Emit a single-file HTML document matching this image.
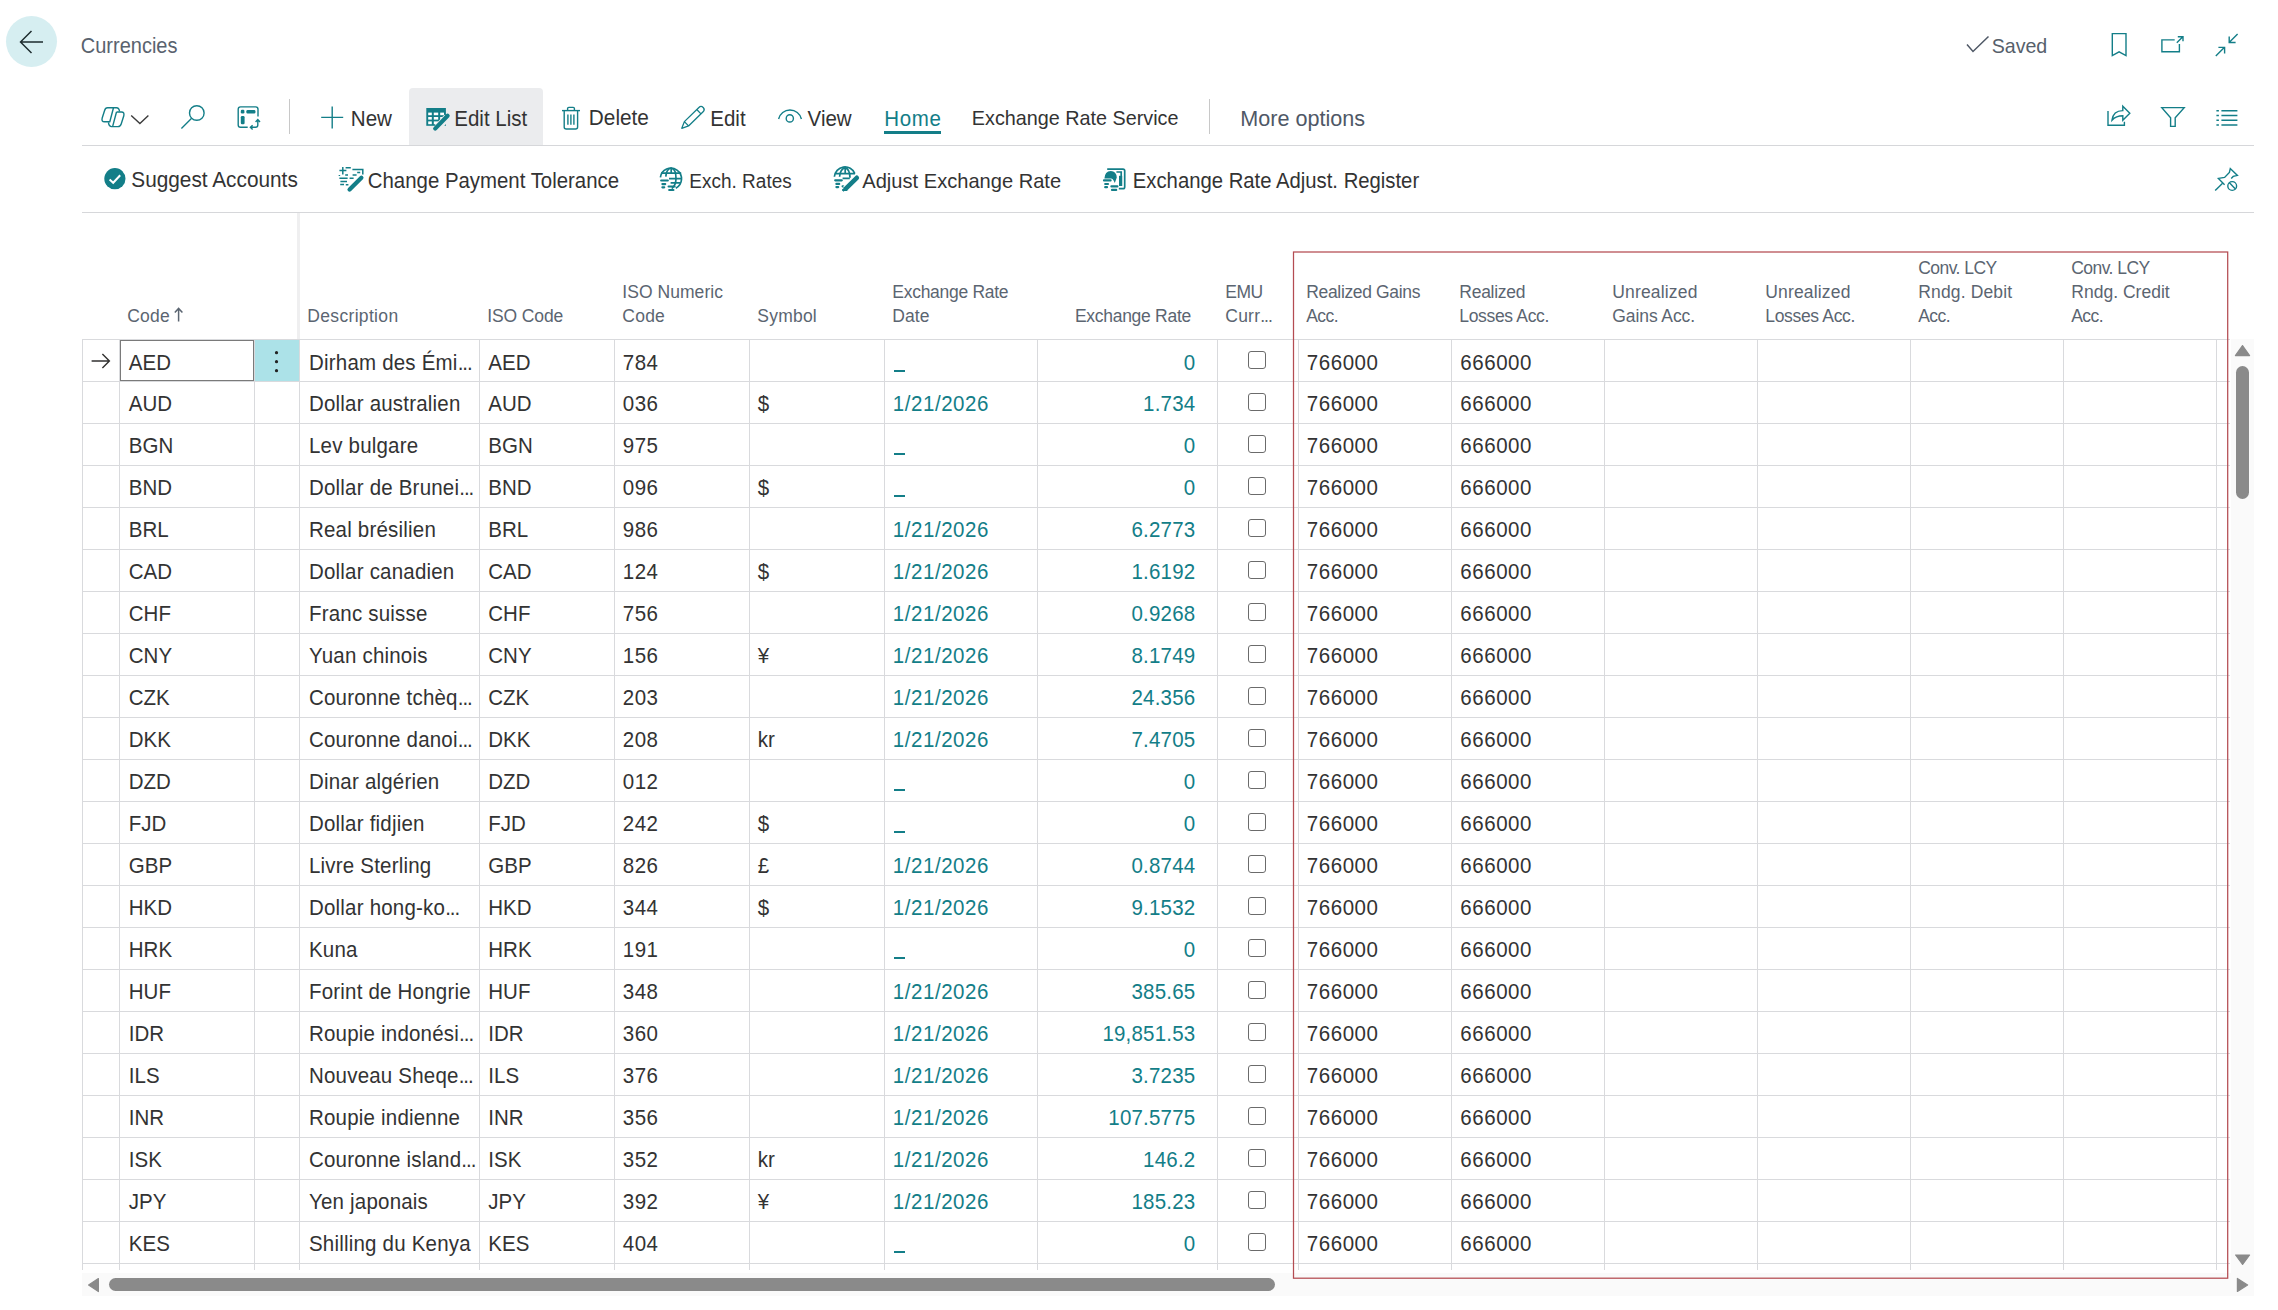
<!DOCTYPE html>
<html><head><meta charset="utf-8"><title>Currencies</title><style>
html,body{margin:0;padding:0;background:#fff;}
body{width:2278px;height:1310px;position:relative;overflow:hidden;font-family:"Liberation Sans", sans-serif;}
.t{position:absolute;white-space:nowrap;}
.hl{position:absolute;left:82px;width:2148px;height:1px;background:#d9dadd;}
.vl{position:absolute;top:339px;width:1px;height:931px;background:#d9dadd;}
.cb{position:absolute;left:1248px;width:18px;height:18px;box-sizing:border-box;border:1.5px solid #6b6b6b;border-radius:3px;background:#fff;}
svg.ov{position:absolute;left:0;top:0;z-index:4;}
</style></head>
<body>
<div style="position:absolute;left:6px;top:16px;width:51px;height:51px;border-radius:50%;background:#d6eef1"></div>
<div class="t" style="left:80.8px;top:36px;font-size:20px;line-height:20px;color:#59626e;transform:scaleY(1.07);transform-origin:0 17px;">Currencies</div>
<div class="t" style="left:1991.7px;top:37px;font-size:19.6px;line-height:19.6px;color:#56606b;transform:scaleY(1.06);transform-origin:0 17px;">Saved</div>
<div style="position:absolute;left:289px;top:99px;width:1px;height:35px;background:#c8c8c8"></div>
<div class="t" style="left:350.8px;top:109px;font-size:20.6px;line-height:20.6px;color:#333333;transform:scaleY(1.05);transform-origin:0 17px;">New</div>
<div style="position:absolute;left:409px;top:88px;width:134px;height:57px;border-radius:4px 4px 0 0;background:#ebecee"></div>
<div class="t" style="left:454.3px;top:109px;font-size:20.5px;line-height:20.5px;color:#333333;transform:scaleY(1.05);transform-origin:0 17px;">Edit List</div>
<div class="t" style="left:588.8px;top:108px;font-size:20.8px;line-height:20.8px;color:#333333;transform:scaleY(1.05);transform-origin:0 18px;">Delete</div>
<div class="t" style="left:710.3px;top:109px;font-size:20.5px;line-height:20.5px;color:#333333;transform:scaleY(1.05);transform-origin:0 17px;">Edit</div>
<div class="t" style="left:807.5999999999999px;top:109px;font-size:20.5px;line-height:20.5px;color:#333333;transform:scaleY(1.05);transform-origin:0 17px;">View</div>
<div class="t" style="left:884.3px;top:109px;font-size:20.5px;line-height:20.5px;color:#137e88;transform:scaleY(1.05);transform-origin:0 17px;letter-spacing:0.6px;">Home</div>
<div style="position:absolute;left:884px;top:131px;width:57px;height:3px;background:#137e88"></div>
<div class="t" style="left:971.8px;top:109px;font-size:19.8px;line-height:19.8px;color:#333333;transform:scaleY(1.05);transform-origin:0 17px;">Exchange Rate Service</div>
<div style="position:absolute;left:1209px;top:99px;width:1px;height:35px;background:#c8c8c8"></div>
<div class="t" style="left:1240.3px;top:108px;font-size:21.6px;line-height:21.6px;color:#4f5866;transform:scaleY(1.03);transform-origin:0 18px;">More options</div>
<div style="position:absolute;left:82px;top:145px;width:2172px;height:1px;background:#d6d7da"></div>
<div class="t" style="left:131.3px;top:169.5px;font-size:20.8px;line-height:20.8px;color:#333333;transform:scaleY(1.05);transform-origin:0 18px;">Suggest Accounts</div>
<div class="t" style="left:367.8px;top:170.5px;font-size:20.4px;line-height:20.4px;color:#333333;transform:scaleY(1.05);transform-origin:0 17px;">Change Payment Tolerance</div>
<div class="t" style="left:689.3px;top:171.5px;font-size:19.0px;line-height:19.0px;color:#333333;transform:scaleY(1.05);transform-origin:0 16px;">Exch. Rates</div>
<div class="t" style="left:862.3px;top:170.5px;font-size:20.1px;line-height:20.1px;color:#333333;transform:scaleY(1.05);transform-origin:0 17px;">Adjust Exchange Rate</div>
<div class="t" style="left:1132.8px;top:170.5px;font-size:20.3px;line-height:20.3px;color:#333333;transform:scaleY(1.05);transform-origin:0 17px;">Exchange Rate Adjust. Register</div>
<div style="position:absolute;left:82px;top:212px;width:2172px;height:1px;background:#d6d7da"></div>
<div style="position:absolute;left:297px;top:213px;width:3px;height:126px;background:#efeff0"></div>
<div class="hl" style="top:339px"></div>
<div class="hl" style="top:381px"></div>
<div class="hl" style="top:423px"></div>
<div class="hl" style="top:465px"></div>
<div class="hl" style="top:507px"></div>
<div class="hl" style="top:549px"></div>
<div class="hl" style="top:591px"></div>
<div class="hl" style="top:633px"></div>
<div class="hl" style="top:675px"></div>
<div class="hl" style="top:717px"></div>
<div class="hl" style="top:759px"></div>
<div class="hl" style="top:801px"></div>
<div class="hl" style="top:843px"></div>
<div class="hl" style="top:885px"></div>
<div class="hl" style="top:927px"></div>
<div class="hl" style="top:969px"></div>
<div class="hl" style="top:1011px"></div>
<div class="hl" style="top:1053px"></div>
<div class="hl" style="top:1095px"></div>
<div class="hl" style="top:1137px"></div>
<div class="hl" style="top:1179px"></div>
<div class="hl" style="top:1221px"></div>
<div class="hl" style="top:1263px"></div>
<div class="vl" style="left:82px"></div>
<div class="vl" style="left:119px"></div>
<div class="vl" style="left:254px"></div>
<div class="vl" style="left:299px"></div>
<div class="vl" style="left:479px"></div>
<div class="vl" style="left:614px"></div>
<div class="vl" style="left:749px"></div>
<div class="vl" style="left:884px"></div>
<div class="vl" style="left:1037px"></div>
<div class="vl" style="left:1217px"></div>
<div class="vl" style="left:1298px"></div>
<div class="vl" style="left:1451px"></div>
<div class="vl" style="left:1604px"></div>
<div class="vl" style="left:1757px"></div>
<div class="vl" style="left:1910px"></div>
<div class="vl" style="left:2063px"></div>
<div class="vl" style="left:2216px"></div>
<div style="position:absolute;left:255px;top:340px;width:44px;height:41px;background:#ace2e8"></div>
<div style="position:absolute;left:120px;top:340px;width:134px;height:41px;box-sizing:border-box;border:1.5px solid #7a7a7a;background:#fff"></div>
<div class="t" style="left:128.8px;top:352.6px;font-size:20.5px;line-height:20.5px;color:#333333;transform:scaleY(1.06);transform-origin:0 17px;">AED</div>
<div class="t" style="left:309.0px;top:352.6px;font-size:20.5px;line-height:20.5px;color:#333333;transform:scaleY(1.06);transform-origin:0 17px;letter-spacing:0.2px;">Dirham des Émi<span style="letter-spacing:-1.0px">...</span></div>
<div class="t" style="left:488.3px;top:352.6px;font-size:20.5px;line-height:20.5px;color:#333333;transform:scaleY(1.06);transform-origin:0 17px;">AED</div>
<div class="t" style="left:622.8px;top:352.6px;font-size:20.5px;line-height:20.5px;color:#333333;transform:scaleY(1.06);transform-origin:0 17px;letter-spacing:0.5px;">784</div>
<div style="position:absolute;left:894px;top:370.1px;width:11px;height:2.4px;background:#137e88"></div>
<div class="t" style="right:1082.6px;top:352.6px;font-size:20.5px;line-height:20.5px;color:#137e88;transform:scaleY(1.06);transform-origin:0 17px;letter-spacing:0.2px;">0</div>
<div class="cb" style="top:351px"></div>
<div class="t" style="left:1306.8px;top:352.6px;font-size:20.5px;line-height:20.5px;color:#333333;transform:scaleY(1.06);transform-origin:0 17px;letter-spacing:0.55px;">766000</div>
<div class="t" style="left:1460.3px;top:352.6px;font-size:20.5px;line-height:20.5px;color:#333333;transform:scaleY(1.06);transform-origin:0 17px;letter-spacing:0.55px;">666000</div>
<div class="t" style="left:128.8px;top:393.6px;font-size:20.5px;line-height:20.5px;color:#333333;transform:scaleY(1.06);transform-origin:0 17px;">AUD</div>
<div class="t" style="left:309.0px;top:393.6px;font-size:20.5px;line-height:20.5px;color:#333333;transform:scaleY(1.06);transform-origin:0 17px;letter-spacing:0.2px;">Dollar australien</div>
<div class="t" style="left:488.3px;top:393.6px;font-size:20.5px;line-height:20.5px;color:#333333;transform:scaleY(1.06);transform-origin:0 17px;">AUD</div>
<div class="t" style="left:622.8px;top:393.6px;font-size:20.5px;line-height:20.5px;color:#333333;transform:scaleY(1.06);transform-origin:0 17px;letter-spacing:0.5px;">036</div>
<div class="t" style="left:757.8px;top:393.6px;font-size:20.5px;line-height:20.5px;color:#333333;transform:scaleY(1.06);transform-origin:0 17px;">$</div>
<div class="t" style="left:892.8px;top:393.6px;font-size:20.5px;line-height:20.5px;color:#137e88;transform:scaleY(1.06);transform-origin:0 17px;letter-spacing:0.55px;">1/21/2026</div>
<div class="t" style="right:1082.6px;top:393.6px;font-size:20.5px;line-height:20.5px;color:#137e88;transform:scaleY(1.06);transform-origin:0 17px;letter-spacing:0.2px;">1.734</div>
<div class="cb" style="top:393px"></div>
<div class="t" style="left:1306.8px;top:393.6px;font-size:20.5px;line-height:20.5px;color:#333333;transform:scaleY(1.06);transform-origin:0 17px;letter-spacing:0.55px;">766000</div>
<div class="t" style="left:1460.3px;top:393.6px;font-size:20.5px;line-height:20.5px;color:#333333;transform:scaleY(1.06);transform-origin:0 17px;letter-spacing:0.55px;">666000</div>
<div class="t" style="left:128.8px;top:435.6px;font-size:20.5px;line-height:20.5px;color:#333333;transform:scaleY(1.06);transform-origin:0 17px;">BGN</div>
<div class="t" style="left:309.0px;top:435.6px;font-size:20.5px;line-height:20.5px;color:#333333;transform:scaleY(1.06);transform-origin:0 17px;letter-spacing:0.2px;">Lev bulgare</div>
<div class="t" style="left:488.3px;top:435.6px;font-size:20.5px;line-height:20.5px;color:#333333;transform:scaleY(1.06);transform-origin:0 17px;">BGN</div>
<div class="t" style="left:622.8px;top:435.6px;font-size:20.5px;line-height:20.5px;color:#333333;transform:scaleY(1.06);transform-origin:0 17px;letter-spacing:0.5px;">975</div>
<div style="position:absolute;left:894px;top:453.1px;width:11px;height:2.4px;background:#137e88"></div>
<div class="t" style="right:1082.6px;top:435.6px;font-size:20.5px;line-height:20.5px;color:#137e88;transform:scaleY(1.06);transform-origin:0 17px;letter-spacing:0.2px;">0</div>
<div class="cb" style="top:435px"></div>
<div class="t" style="left:1306.8px;top:435.6px;font-size:20.5px;line-height:20.5px;color:#333333;transform:scaleY(1.06);transform-origin:0 17px;letter-spacing:0.55px;">766000</div>
<div class="t" style="left:1460.3px;top:435.6px;font-size:20.5px;line-height:20.5px;color:#333333;transform:scaleY(1.06);transform-origin:0 17px;letter-spacing:0.55px;">666000</div>
<div class="t" style="left:128.8px;top:477.6px;font-size:20.5px;line-height:20.5px;color:#333333;transform:scaleY(1.06);transform-origin:0 17px;">BND</div>
<div class="t" style="left:309.0px;top:477.6px;font-size:20.5px;line-height:20.5px;color:#333333;transform:scaleY(1.06);transform-origin:0 17px;letter-spacing:0.2px;">Dollar de Brunei<span style="letter-spacing:-1.0px">...</span></div>
<div class="t" style="left:488.3px;top:477.6px;font-size:20.5px;line-height:20.5px;color:#333333;transform:scaleY(1.06);transform-origin:0 17px;">BND</div>
<div class="t" style="left:622.8px;top:477.6px;font-size:20.5px;line-height:20.5px;color:#333333;transform:scaleY(1.06);transform-origin:0 17px;letter-spacing:0.5px;">096</div>
<div class="t" style="left:757.8px;top:477.6px;font-size:20.5px;line-height:20.5px;color:#333333;transform:scaleY(1.06);transform-origin:0 17px;">$</div>
<div style="position:absolute;left:894px;top:495.1px;width:11px;height:2.4px;background:#137e88"></div>
<div class="t" style="right:1082.6px;top:477.6px;font-size:20.5px;line-height:20.5px;color:#137e88;transform:scaleY(1.06);transform-origin:0 17px;letter-spacing:0.2px;">0</div>
<div class="cb" style="top:477px"></div>
<div class="t" style="left:1306.8px;top:477.6px;font-size:20.5px;line-height:20.5px;color:#333333;transform:scaleY(1.06);transform-origin:0 17px;letter-spacing:0.55px;">766000</div>
<div class="t" style="left:1460.3px;top:477.6px;font-size:20.5px;line-height:20.5px;color:#333333;transform:scaleY(1.06);transform-origin:0 17px;letter-spacing:0.55px;">666000</div>
<div class="t" style="left:128.8px;top:519.6px;font-size:20.5px;line-height:20.5px;color:#333333;transform:scaleY(1.06);transform-origin:0 17px;">BRL</div>
<div class="t" style="left:309.0px;top:519.6px;font-size:20.5px;line-height:20.5px;color:#333333;transform:scaleY(1.06);transform-origin:0 17px;letter-spacing:0.2px;">Real brésilien</div>
<div class="t" style="left:488.3px;top:519.6px;font-size:20.5px;line-height:20.5px;color:#333333;transform:scaleY(1.06);transform-origin:0 17px;">BRL</div>
<div class="t" style="left:622.8px;top:519.6px;font-size:20.5px;line-height:20.5px;color:#333333;transform:scaleY(1.06);transform-origin:0 17px;letter-spacing:0.5px;">986</div>
<div class="t" style="left:892.8px;top:519.6px;font-size:20.5px;line-height:20.5px;color:#137e88;transform:scaleY(1.06);transform-origin:0 17px;letter-spacing:0.55px;">1/21/2026</div>
<div class="t" style="right:1082.6px;top:519.6px;font-size:20.5px;line-height:20.5px;color:#137e88;transform:scaleY(1.06);transform-origin:0 17px;letter-spacing:0.2px;">6.2773</div>
<div class="cb" style="top:519px"></div>
<div class="t" style="left:1306.8px;top:519.6px;font-size:20.5px;line-height:20.5px;color:#333333;transform:scaleY(1.06);transform-origin:0 17px;letter-spacing:0.55px;">766000</div>
<div class="t" style="left:1460.3px;top:519.6px;font-size:20.5px;line-height:20.5px;color:#333333;transform:scaleY(1.06);transform-origin:0 17px;letter-spacing:0.55px;">666000</div>
<div class="t" style="left:128.8px;top:561.6px;font-size:20.5px;line-height:20.5px;color:#333333;transform:scaleY(1.06);transform-origin:0 17px;">CAD</div>
<div class="t" style="left:309.0px;top:561.6px;font-size:20.5px;line-height:20.5px;color:#333333;transform:scaleY(1.06);transform-origin:0 17px;letter-spacing:0.2px;">Dollar canadien</div>
<div class="t" style="left:488.3px;top:561.6px;font-size:20.5px;line-height:20.5px;color:#333333;transform:scaleY(1.06);transform-origin:0 17px;">CAD</div>
<div class="t" style="left:622.8px;top:561.6px;font-size:20.5px;line-height:20.5px;color:#333333;transform:scaleY(1.06);transform-origin:0 17px;letter-spacing:0.5px;">124</div>
<div class="t" style="left:757.8px;top:561.6px;font-size:20.5px;line-height:20.5px;color:#333333;transform:scaleY(1.06);transform-origin:0 17px;">$</div>
<div class="t" style="left:892.8px;top:561.6px;font-size:20.5px;line-height:20.5px;color:#137e88;transform:scaleY(1.06);transform-origin:0 17px;letter-spacing:0.55px;">1/21/2026</div>
<div class="t" style="right:1082.6px;top:561.6px;font-size:20.5px;line-height:20.5px;color:#137e88;transform:scaleY(1.06);transform-origin:0 17px;letter-spacing:0.2px;">1.6192</div>
<div class="cb" style="top:561px"></div>
<div class="t" style="left:1306.8px;top:561.6px;font-size:20.5px;line-height:20.5px;color:#333333;transform:scaleY(1.06);transform-origin:0 17px;letter-spacing:0.55px;">766000</div>
<div class="t" style="left:1460.3px;top:561.6px;font-size:20.5px;line-height:20.5px;color:#333333;transform:scaleY(1.06);transform-origin:0 17px;letter-spacing:0.55px;">666000</div>
<div class="t" style="left:128.8px;top:603.6px;font-size:20.5px;line-height:20.5px;color:#333333;transform:scaleY(1.06);transform-origin:0 17px;">CHF</div>
<div class="t" style="left:309.0px;top:603.6px;font-size:20.5px;line-height:20.5px;color:#333333;transform:scaleY(1.06);transform-origin:0 17px;letter-spacing:0.2px;">Franc suisse</div>
<div class="t" style="left:488.3px;top:603.6px;font-size:20.5px;line-height:20.5px;color:#333333;transform:scaleY(1.06);transform-origin:0 17px;">CHF</div>
<div class="t" style="left:622.8px;top:603.6px;font-size:20.5px;line-height:20.5px;color:#333333;transform:scaleY(1.06);transform-origin:0 17px;letter-spacing:0.5px;">756</div>
<div class="t" style="left:892.8px;top:603.6px;font-size:20.5px;line-height:20.5px;color:#137e88;transform:scaleY(1.06);transform-origin:0 17px;letter-spacing:0.55px;">1/21/2026</div>
<div class="t" style="right:1082.6px;top:603.6px;font-size:20.5px;line-height:20.5px;color:#137e88;transform:scaleY(1.06);transform-origin:0 17px;letter-spacing:0.2px;">0.9268</div>
<div class="cb" style="top:603px"></div>
<div class="t" style="left:1306.8px;top:603.6px;font-size:20.5px;line-height:20.5px;color:#333333;transform:scaleY(1.06);transform-origin:0 17px;letter-spacing:0.55px;">766000</div>
<div class="t" style="left:1460.3px;top:603.6px;font-size:20.5px;line-height:20.5px;color:#333333;transform:scaleY(1.06);transform-origin:0 17px;letter-spacing:0.55px;">666000</div>
<div class="t" style="left:128.8px;top:645.6px;font-size:20.5px;line-height:20.5px;color:#333333;transform:scaleY(1.06);transform-origin:0 17px;">CNY</div>
<div class="t" style="left:309.0px;top:645.6px;font-size:20.5px;line-height:20.5px;color:#333333;transform:scaleY(1.06);transform-origin:0 17px;letter-spacing:0.2px;">Yuan chinois</div>
<div class="t" style="left:488.3px;top:645.6px;font-size:20.5px;line-height:20.5px;color:#333333;transform:scaleY(1.06);transform-origin:0 17px;">CNY</div>
<div class="t" style="left:622.8px;top:645.6px;font-size:20.5px;line-height:20.5px;color:#333333;transform:scaleY(1.06);transform-origin:0 17px;letter-spacing:0.5px;">156</div>
<div class="t" style="left:757.8px;top:645.6px;font-size:20.5px;line-height:20.5px;color:#333333;transform:scaleY(1.06);transform-origin:0 17px;">¥</div>
<div class="t" style="left:892.8px;top:645.6px;font-size:20.5px;line-height:20.5px;color:#137e88;transform:scaleY(1.06);transform-origin:0 17px;letter-spacing:0.55px;">1/21/2026</div>
<div class="t" style="right:1082.6px;top:645.6px;font-size:20.5px;line-height:20.5px;color:#137e88;transform:scaleY(1.06);transform-origin:0 17px;letter-spacing:0.2px;">8.1749</div>
<div class="cb" style="top:645px"></div>
<div class="t" style="left:1306.8px;top:645.6px;font-size:20.5px;line-height:20.5px;color:#333333;transform:scaleY(1.06);transform-origin:0 17px;letter-spacing:0.55px;">766000</div>
<div class="t" style="left:1460.3px;top:645.6px;font-size:20.5px;line-height:20.5px;color:#333333;transform:scaleY(1.06);transform-origin:0 17px;letter-spacing:0.55px;">666000</div>
<div class="t" style="left:128.8px;top:687.6px;font-size:20.5px;line-height:20.5px;color:#333333;transform:scaleY(1.06);transform-origin:0 17px;">CZK</div>
<div class="t" style="left:309.0px;top:687.6px;font-size:20.5px;line-height:20.5px;color:#333333;transform:scaleY(1.06);transform-origin:0 17px;letter-spacing:0.2px;">Couronne tchèq<span style="letter-spacing:-1.0px">...</span></div>
<div class="t" style="left:488.3px;top:687.6px;font-size:20.5px;line-height:20.5px;color:#333333;transform:scaleY(1.06);transform-origin:0 17px;">CZK</div>
<div class="t" style="left:622.8px;top:687.6px;font-size:20.5px;line-height:20.5px;color:#333333;transform:scaleY(1.06);transform-origin:0 17px;letter-spacing:0.5px;">203</div>
<div class="t" style="left:892.8px;top:687.6px;font-size:20.5px;line-height:20.5px;color:#137e88;transform:scaleY(1.06);transform-origin:0 17px;letter-spacing:0.55px;">1/21/2026</div>
<div class="t" style="right:1082.6px;top:687.6px;font-size:20.5px;line-height:20.5px;color:#137e88;transform:scaleY(1.06);transform-origin:0 17px;letter-spacing:0.2px;">24.356</div>
<div class="cb" style="top:687px"></div>
<div class="t" style="left:1306.8px;top:687.6px;font-size:20.5px;line-height:20.5px;color:#333333;transform:scaleY(1.06);transform-origin:0 17px;letter-spacing:0.55px;">766000</div>
<div class="t" style="left:1460.3px;top:687.6px;font-size:20.5px;line-height:20.5px;color:#333333;transform:scaleY(1.06);transform-origin:0 17px;letter-spacing:0.55px;">666000</div>
<div class="t" style="left:128.8px;top:729.6px;font-size:20.5px;line-height:20.5px;color:#333333;transform:scaleY(1.06);transform-origin:0 17px;">DKK</div>
<div class="t" style="left:309.0px;top:729.6px;font-size:20.5px;line-height:20.5px;color:#333333;transform:scaleY(1.06);transform-origin:0 17px;letter-spacing:0.2px;">Couronne danoi<span style="letter-spacing:-1.0px">...</span></div>
<div class="t" style="left:488.3px;top:729.6px;font-size:20.5px;line-height:20.5px;color:#333333;transform:scaleY(1.06);transform-origin:0 17px;">DKK</div>
<div class="t" style="left:622.8px;top:729.6px;font-size:20.5px;line-height:20.5px;color:#333333;transform:scaleY(1.06);transform-origin:0 17px;letter-spacing:0.5px;">208</div>
<div class="t" style="left:757.8px;top:729.6px;font-size:20.5px;line-height:20.5px;color:#333333;transform:scaleY(1.06);transform-origin:0 17px;">kr</div>
<div class="t" style="left:892.8px;top:729.6px;font-size:20.5px;line-height:20.5px;color:#137e88;transform:scaleY(1.06);transform-origin:0 17px;letter-spacing:0.55px;">1/21/2026</div>
<div class="t" style="right:1082.6px;top:729.6px;font-size:20.5px;line-height:20.5px;color:#137e88;transform:scaleY(1.06);transform-origin:0 17px;letter-spacing:0.2px;">7.4705</div>
<div class="cb" style="top:729px"></div>
<div class="t" style="left:1306.8px;top:729.6px;font-size:20.5px;line-height:20.5px;color:#333333;transform:scaleY(1.06);transform-origin:0 17px;letter-spacing:0.55px;">766000</div>
<div class="t" style="left:1460.3px;top:729.6px;font-size:20.5px;line-height:20.5px;color:#333333;transform:scaleY(1.06);transform-origin:0 17px;letter-spacing:0.55px;">666000</div>
<div class="t" style="left:128.8px;top:771.6px;font-size:20.5px;line-height:20.5px;color:#333333;transform:scaleY(1.06);transform-origin:0 17px;">DZD</div>
<div class="t" style="left:309.0px;top:771.6px;font-size:20.5px;line-height:20.5px;color:#333333;transform:scaleY(1.06);transform-origin:0 17px;letter-spacing:0.2px;">Dinar algérien</div>
<div class="t" style="left:488.3px;top:771.6px;font-size:20.5px;line-height:20.5px;color:#333333;transform:scaleY(1.06);transform-origin:0 17px;">DZD</div>
<div class="t" style="left:622.8px;top:771.6px;font-size:20.5px;line-height:20.5px;color:#333333;transform:scaleY(1.06);transform-origin:0 17px;letter-spacing:0.5px;">012</div>
<div style="position:absolute;left:894px;top:789.1px;width:11px;height:2.4px;background:#137e88"></div>
<div class="t" style="right:1082.6px;top:771.6px;font-size:20.5px;line-height:20.5px;color:#137e88;transform:scaleY(1.06);transform-origin:0 17px;letter-spacing:0.2px;">0</div>
<div class="cb" style="top:771px"></div>
<div class="t" style="left:1306.8px;top:771.6px;font-size:20.5px;line-height:20.5px;color:#333333;transform:scaleY(1.06);transform-origin:0 17px;letter-spacing:0.55px;">766000</div>
<div class="t" style="left:1460.3px;top:771.6px;font-size:20.5px;line-height:20.5px;color:#333333;transform:scaleY(1.06);transform-origin:0 17px;letter-spacing:0.55px;">666000</div>
<div class="t" style="left:128.8px;top:813.6px;font-size:20.5px;line-height:20.5px;color:#333333;transform:scaleY(1.06);transform-origin:0 17px;">FJD</div>
<div class="t" style="left:309.0px;top:813.6px;font-size:20.5px;line-height:20.5px;color:#333333;transform:scaleY(1.06);transform-origin:0 17px;letter-spacing:0.2px;">Dollar fidjien</div>
<div class="t" style="left:488.3px;top:813.6px;font-size:20.5px;line-height:20.5px;color:#333333;transform:scaleY(1.06);transform-origin:0 17px;">FJD</div>
<div class="t" style="left:622.8px;top:813.6px;font-size:20.5px;line-height:20.5px;color:#333333;transform:scaleY(1.06);transform-origin:0 17px;letter-spacing:0.5px;">242</div>
<div class="t" style="left:757.8px;top:813.6px;font-size:20.5px;line-height:20.5px;color:#333333;transform:scaleY(1.06);transform-origin:0 17px;">$</div>
<div style="position:absolute;left:894px;top:831.1px;width:11px;height:2.4px;background:#137e88"></div>
<div class="t" style="right:1082.6px;top:813.6px;font-size:20.5px;line-height:20.5px;color:#137e88;transform:scaleY(1.06);transform-origin:0 17px;letter-spacing:0.2px;">0</div>
<div class="cb" style="top:813px"></div>
<div class="t" style="left:1306.8px;top:813.6px;font-size:20.5px;line-height:20.5px;color:#333333;transform:scaleY(1.06);transform-origin:0 17px;letter-spacing:0.55px;">766000</div>
<div class="t" style="left:1460.3px;top:813.6px;font-size:20.5px;line-height:20.5px;color:#333333;transform:scaleY(1.06);transform-origin:0 17px;letter-spacing:0.55px;">666000</div>
<div class="t" style="left:128.8px;top:855.6px;font-size:20.5px;line-height:20.5px;color:#333333;transform:scaleY(1.06);transform-origin:0 17px;">GBP</div>
<div class="t" style="left:309.0px;top:855.6px;font-size:20.5px;line-height:20.5px;color:#333333;transform:scaleY(1.06);transform-origin:0 17px;letter-spacing:0.2px;">Livre Sterling</div>
<div class="t" style="left:488.3px;top:855.6px;font-size:20.5px;line-height:20.5px;color:#333333;transform:scaleY(1.06);transform-origin:0 17px;">GBP</div>
<div class="t" style="left:622.8px;top:855.6px;font-size:20.5px;line-height:20.5px;color:#333333;transform:scaleY(1.06);transform-origin:0 17px;letter-spacing:0.5px;">826</div>
<div class="t" style="left:757.8px;top:855.6px;font-size:20.5px;line-height:20.5px;color:#333333;transform:scaleY(1.06);transform-origin:0 17px;">£</div>
<div class="t" style="left:892.8px;top:855.6px;font-size:20.5px;line-height:20.5px;color:#137e88;transform:scaleY(1.06);transform-origin:0 17px;letter-spacing:0.55px;">1/21/2026</div>
<div class="t" style="right:1082.6px;top:855.6px;font-size:20.5px;line-height:20.5px;color:#137e88;transform:scaleY(1.06);transform-origin:0 17px;letter-spacing:0.2px;">0.8744</div>
<div class="cb" style="top:855px"></div>
<div class="t" style="left:1306.8px;top:855.6px;font-size:20.5px;line-height:20.5px;color:#333333;transform:scaleY(1.06);transform-origin:0 17px;letter-spacing:0.55px;">766000</div>
<div class="t" style="left:1460.3px;top:855.6px;font-size:20.5px;line-height:20.5px;color:#333333;transform:scaleY(1.06);transform-origin:0 17px;letter-spacing:0.55px;">666000</div>
<div class="t" style="left:128.8px;top:897.6px;font-size:20.5px;line-height:20.5px;color:#333333;transform:scaleY(1.06);transform-origin:0 17px;">HKD</div>
<div class="t" style="left:309.0px;top:897.6px;font-size:20.5px;line-height:20.5px;color:#333333;transform:scaleY(1.06);transform-origin:0 17px;letter-spacing:0.2px;">Dollar hong-ko<span style="letter-spacing:-1.0px">...</span></div>
<div class="t" style="left:488.3px;top:897.6px;font-size:20.5px;line-height:20.5px;color:#333333;transform:scaleY(1.06);transform-origin:0 17px;">HKD</div>
<div class="t" style="left:622.8px;top:897.6px;font-size:20.5px;line-height:20.5px;color:#333333;transform:scaleY(1.06);transform-origin:0 17px;letter-spacing:0.5px;">344</div>
<div class="t" style="left:757.8px;top:897.6px;font-size:20.5px;line-height:20.5px;color:#333333;transform:scaleY(1.06);transform-origin:0 17px;">$</div>
<div class="t" style="left:892.8px;top:897.6px;font-size:20.5px;line-height:20.5px;color:#137e88;transform:scaleY(1.06);transform-origin:0 17px;letter-spacing:0.55px;">1/21/2026</div>
<div class="t" style="right:1082.6px;top:897.6px;font-size:20.5px;line-height:20.5px;color:#137e88;transform:scaleY(1.06);transform-origin:0 17px;letter-spacing:0.2px;">9.1532</div>
<div class="cb" style="top:897px"></div>
<div class="t" style="left:1306.8px;top:897.6px;font-size:20.5px;line-height:20.5px;color:#333333;transform:scaleY(1.06);transform-origin:0 17px;letter-spacing:0.55px;">766000</div>
<div class="t" style="left:1460.3px;top:897.6px;font-size:20.5px;line-height:20.5px;color:#333333;transform:scaleY(1.06);transform-origin:0 17px;letter-spacing:0.55px;">666000</div>
<div class="t" style="left:128.8px;top:939.6px;font-size:20.5px;line-height:20.5px;color:#333333;transform:scaleY(1.06);transform-origin:0 17px;">HRK</div>
<div class="t" style="left:309.0px;top:939.6px;font-size:20.5px;line-height:20.5px;color:#333333;transform:scaleY(1.06);transform-origin:0 17px;letter-spacing:0.2px;">Kuna</div>
<div class="t" style="left:488.3px;top:939.6px;font-size:20.5px;line-height:20.5px;color:#333333;transform:scaleY(1.06);transform-origin:0 17px;">HRK</div>
<div class="t" style="left:622.8px;top:939.6px;font-size:20.5px;line-height:20.5px;color:#333333;transform:scaleY(1.06);transform-origin:0 17px;letter-spacing:0.5px;">191</div>
<div style="position:absolute;left:894px;top:957.1px;width:11px;height:2.4px;background:#137e88"></div>
<div class="t" style="right:1082.6px;top:939.6px;font-size:20.5px;line-height:20.5px;color:#137e88;transform:scaleY(1.06);transform-origin:0 17px;letter-spacing:0.2px;">0</div>
<div class="cb" style="top:939px"></div>
<div class="t" style="left:1306.8px;top:939.6px;font-size:20.5px;line-height:20.5px;color:#333333;transform:scaleY(1.06);transform-origin:0 17px;letter-spacing:0.55px;">766000</div>
<div class="t" style="left:1460.3px;top:939.6px;font-size:20.5px;line-height:20.5px;color:#333333;transform:scaleY(1.06);transform-origin:0 17px;letter-spacing:0.55px;">666000</div>
<div class="t" style="left:128.8px;top:981.6px;font-size:20.5px;line-height:20.5px;color:#333333;transform:scaleY(1.06);transform-origin:0 17px;">HUF</div>
<div class="t" style="left:309.0px;top:981.6px;font-size:20.5px;line-height:20.5px;color:#333333;transform:scaleY(1.06);transform-origin:0 17px;letter-spacing:0.2px;">Forint de Hongrie</div>
<div class="t" style="left:488.3px;top:981.6px;font-size:20.5px;line-height:20.5px;color:#333333;transform:scaleY(1.06);transform-origin:0 17px;">HUF</div>
<div class="t" style="left:622.8px;top:981.6px;font-size:20.5px;line-height:20.5px;color:#333333;transform:scaleY(1.06);transform-origin:0 17px;letter-spacing:0.5px;">348</div>
<div class="t" style="left:892.8px;top:981.6px;font-size:20.5px;line-height:20.5px;color:#137e88;transform:scaleY(1.06);transform-origin:0 17px;letter-spacing:0.55px;">1/21/2026</div>
<div class="t" style="right:1082.6px;top:981.6px;font-size:20.5px;line-height:20.5px;color:#137e88;transform:scaleY(1.06);transform-origin:0 17px;letter-spacing:0.2px;">385.65</div>
<div class="cb" style="top:981px"></div>
<div class="t" style="left:1306.8px;top:981.6px;font-size:20.5px;line-height:20.5px;color:#333333;transform:scaleY(1.06);transform-origin:0 17px;letter-spacing:0.55px;">766000</div>
<div class="t" style="left:1460.3px;top:981.6px;font-size:20.5px;line-height:20.5px;color:#333333;transform:scaleY(1.06);transform-origin:0 17px;letter-spacing:0.55px;">666000</div>
<div class="t" style="left:128.8px;top:1023.5999999999999px;font-size:20.5px;line-height:20.5px;color:#333333;transform:scaleY(1.06);transform-origin:0 17px;">IDR</div>
<div class="t" style="left:309.0px;top:1023.5999999999999px;font-size:20.5px;line-height:20.5px;color:#333333;transform:scaleY(1.06);transform-origin:0 17px;letter-spacing:0.2px;">Roupie indonési<span style="letter-spacing:-1.0px">...</span></div>
<div class="t" style="left:488.3px;top:1023.5999999999999px;font-size:20.5px;line-height:20.5px;color:#333333;transform:scaleY(1.06);transform-origin:0 17px;">IDR</div>
<div class="t" style="left:622.8px;top:1023.5999999999999px;font-size:20.5px;line-height:20.5px;color:#333333;transform:scaleY(1.06);transform-origin:0 17px;letter-spacing:0.5px;">360</div>
<div class="t" style="left:892.8px;top:1023.5999999999999px;font-size:20.5px;line-height:20.5px;color:#137e88;transform:scaleY(1.06);transform-origin:0 17px;letter-spacing:0.55px;">1/21/2026</div>
<div class="t" style="right:1082.6px;top:1023.5999999999999px;font-size:20.5px;line-height:20.5px;color:#137e88;transform:scaleY(1.06);transform-origin:0 17px;letter-spacing:0.2px;">19,851.53</div>
<div class="cb" style="top:1023px"></div>
<div class="t" style="left:1306.8px;top:1023.5999999999999px;font-size:20.5px;line-height:20.5px;color:#333333;transform:scaleY(1.06);transform-origin:0 17px;letter-spacing:0.55px;">766000</div>
<div class="t" style="left:1460.3px;top:1023.5999999999999px;font-size:20.5px;line-height:20.5px;color:#333333;transform:scaleY(1.06);transform-origin:0 17px;letter-spacing:0.55px;">666000</div>
<div class="t" style="left:128.8px;top:1065.6px;font-size:20.5px;line-height:20.5px;color:#333333;transform:scaleY(1.06);transform-origin:0 17px;">ILS</div>
<div class="t" style="left:309.0px;top:1065.6px;font-size:20.5px;line-height:20.5px;color:#333333;transform:scaleY(1.06);transform-origin:0 17px;letter-spacing:0.2px;">Nouveau Sheqe<span style="letter-spacing:-1.0px">...</span></div>
<div class="t" style="left:488.3px;top:1065.6px;font-size:20.5px;line-height:20.5px;color:#333333;transform:scaleY(1.06);transform-origin:0 17px;">ILS</div>
<div class="t" style="left:622.8px;top:1065.6px;font-size:20.5px;line-height:20.5px;color:#333333;transform:scaleY(1.06);transform-origin:0 17px;letter-spacing:0.5px;">376</div>
<div class="t" style="left:892.8px;top:1065.6px;font-size:20.5px;line-height:20.5px;color:#137e88;transform:scaleY(1.06);transform-origin:0 17px;letter-spacing:0.55px;">1/21/2026</div>
<div class="t" style="right:1082.6px;top:1065.6px;font-size:20.5px;line-height:20.5px;color:#137e88;transform:scaleY(1.06);transform-origin:0 17px;letter-spacing:0.2px;">3.7235</div>
<div class="cb" style="top:1065px"></div>
<div class="t" style="left:1306.8px;top:1065.6px;font-size:20.5px;line-height:20.5px;color:#333333;transform:scaleY(1.06);transform-origin:0 17px;letter-spacing:0.55px;">766000</div>
<div class="t" style="left:1460.3px;top:1065.6px;font-size:20.5px;line-height:20.5px;color:#333333;transform:scaleY(1.06);transform-origin:0 17px;letter-spacing:0.55px;">666000</div>
<div class="t" style="left:128.8px;top:1107.6px;font-size:20.5px;line-height:20.5px;color:#333333;transform:scaleY(1.06);transform-origin:0 17px;">INR</div>
<div class="t" style="left:309.0px;top:1107.6px;font-size:20.5px;line-height:20.5px;color:#333333;transform:scaleY(1.06);transform-origin:0 17px;letter-spacing:0.2px;">Roupie indienne</div>
<div class="t" style="left:488.3px;top:1107.6px;font-size:20.5px;line-height:20.5px;color:#333333;transform:scaleY(1.06);transform-origin:0 17px;">INR</div>
<div class="t" style="left:622.8px;top:1107.6px;font-size:20.5px;line-height:20.5px;color:#333333;transform:scaleY(1.06);transform-origin:0 17px;letter-spacing:0.5px;">356</div>
<div class="t" style="left:892.8px;top:1107.6px;font-size:20.5px;line-height:20.5px;color:#137e88;transform:scaleY(1.06);transform-origin:0 17px;letter-spacing:0.55px;">1/21/2026</div>
<div class="t" style="right:1082.6px;top:1107.6px;font-size:20.5px;line-height:20.5px;color:#137e88;transform:scaleY(1.06);transform-origin:0 17px;letter-spacing:0.2px;">107.5775</div>
<div class="cb" style="top:1107px"></div>
<div class="t" style="left:1306.8px;top:1107.6px;font-size:20.5px;line-height:20.5px;color:#333333;transform:scaleY(1.06);transform-origin:0 17px;letter-spacing:0.55px;">766000</div>
<div class="t" style="left:1460.3px;top:1107.6px;font-size:20.5px;line-height:20.5px;color:#333333;transform:scaleY(1.06);transform-origin:0 17px;letter-spacing:0.55px;">666000</div>
<div class="t" style="left:128.8px;top:1149.6px;font-size:20.5px;line-height:20.5px;color:#333333;transform:scaleY(1.06);transform-origin:0 17px;">ISK</div>
<div class="t" style="left:309.0px;top:1149.6px;font-size:20.5px;line-height:20.5px;color:#333333;transform:scaleY(1.06);transform-origin:0 17px;letter-spacing:0.2px;">Couronne island<span style="letter-spacing:-1.0px">...</span></div>
<div class="t" style="left:488.3px;top:1149.6px;font-size:20.5px;line-height:20.5px;color:#333333;transform:scaleY(1.06);transform-origin:0 17px;">ISK</div>
<div class="t" style="left:622.8px;top:1149.6px;font-size:20.5px;line-height:20.5px;color:#333333;transform:scaleY(1.06);transform-origin:0 17px;letter-spacing:0.5px;">352</div>
<div class="t" style="left:757.8px;top:1149.6px;font-size:20.5px;line-height:20.5px;color:#333333;transform:scaleY(1.06);transform-origin:0 17px;">kr</div>
<div class="t" style="left:892.8px;top:1149.6px;font-size:20.5px;line-height:20.5px;color:#137e88;transform:scaleY(1.06);transform-origin:0 17px;letter-spacing:0.55px;">1/21/2026</div>
<div class="t" style="right:1082.6px;top:1149.6px;font-size:20.5px;line-height:20.5px;color:#137e88;transform:scaleY(1.06);transform-origin:0 17px;letter-spacing:0.2px;">146.2</div>
<div class="cb" style="top:1149px"></div>
<div class="t" style="left:1306.8px;top:1149.6px;font-size:20.5px;line-height:20.5px;color:#333333;transform:scaleY(1.06);transform-origin:0 17px;letter-spacing:0.55px;">766000</div>
<div class="t" style="left:1460.3px;top:1149.6px;font-size:20.5px;line-height:20.5px;color:#333333;transform:scaleY(1.06);transform-origin:0 17px;letter-spacing:0.55px;">666000</div>
<div class="t" style="left:128.8px;top:1191.6px;font-size:20.5px;line-height:20.5px;color:#333333;transform:scaleY(1.06);transform-origin:0 17px;">JPY</div>
<div class="t" style="left:309.0px;top:1191.6px;font-size:20.5px;line-height:20.5px;color:#333333;transform:scaleY(1.06);transform-origin:0 17px;letter-spacing:0.2px;">Yen japonais</div>
<div class="t" style="left:488.3px;top:1191.6px;font-size:20.5px;line-height:20.5px;color:#333333;transform:scaleY(1.06);transform-origin:0 17px;">JPY</div>
<div class="t" style="left:622.8px;top:1191.6px;font-size:20.5px;line-height:20.5px;color:#333333;transform:scaleY(1.06);transform-origin:0 17px;letter-spacing:0.5px;">392</div>
<div class="t" style="left:757.8px;top:1191.6px;font-size:20.5px;line-height:20.5px;color:#333333;transform:scaleY(1.06);transform-origin:0 17px;">¥</div>
<div class="t" style="left:892.8px;top:1191.6px;font-size:20.5px;line-height:20.5px;color:#137e88;transform:scaleY(1.06);transform-origin:0 17px;letter-spacing:0.55px;">1/21/2026</div>
<div class="t" style="right:1082.6px;top:1191.6px;font-size:20.5px;line-height:20.5px;color:#137e88;transform:scaleY(1.06);transform-origin:0 17px;letter-spacing:0.2px;">185.23</div>
<div class="cb" style="top:1191px"></div>
<div class="t" style="left:1306.8px;top:1191.6px;font-size:20.5px;line-height:20.5px;color:#333333;transform:scaleY(1.06);transform-origin:0 17px;letter-spacing:0.55px;">766000</div>
<div class="t" style="left:1460.3px;top:1191.6px;font-size:20.5px;line-height:20.5px;color:#333333;transform:scaleY(1.06);transform-origin:0 17px;letter-spacing:0.55px;">666000</div>
<div class="t" style="left:128.8px;top:1233.6px;font-size:20.5px;line-height:20.5px;color:#333333;transform:scaleY(1.06);transform-origin:0 17px;">KES</div>
<div class="t" style="left:309.0px;top:1233.6px;font-size:20.5px;line-height:20.5px;color:#333333;transform:scaleY(1.06);transform-origin:0 17px;letter-spacing:0.2px;">Shilling du Kenya</div>
<div class="t" style="left:488.3px;top:1233.6px;font-size:20.5px;line-height:20.5px;color:#333333;transform:scaleY(1.06);transform-origin:0 17px;">KES</div>
<div class="t" style="left:622.8px;top:1233.6px;font-size:20.5px;line-height:20.5px;color:#333333;transform:scaleY(1.06);transform-origin:0 17px;letter-spacing:0.5px;">404</div>
<div style="position:absolute;left:894px;top:1251.1px;width:11px;height:2.4px;background:#137e88"></div>
<div class="t" style="right:1082.6px;top:1233.6px;font-size:20.5px;line-height:20.5px;color:#137e88;transform:scaleY(1.06);transform-origin:0 17px;letter-spacing:0.2px;">0</div>
<div class="cb" style="top:1233px"></div>
<div class="t" style="left:1306.8px;top:1233.6px;font-size:20.5px;line-height:20.5px;color:#333333;transform:scaleY(1.06);transform-origin:0 17px;letter-spacing:0.55px;">766000</div>
<div class="t" style="left:1460.3px;top:1233.6px;font-size:20.5px;line-height:20.5px;color:#333333;transform:scaleY(1.06);transform-origin:0 17px;letter-spacing:0.55px;">666000</div>
<div class="t" style="left:127.2px;top:307.6px;font-size:17.5px;line-height:17.5px;color:#5b6571;letter-spacing:0.23px;">Code</div>
<div class="t" style="left:307.3px;top:307.6px;font-size:17.5px;line-height:17.5px;color:#5b6571;letter-spacing:0.33px;">Description</div>
<div class="t" style="left:487.3px;top:307.6px;font-size:17.5px;line-height:17.5px;color:#5b6571;letter-spacing:-0.13px;">ISO Code</div>
<div class="t" style="left:622.3px;top:283.6px;font-size:17.5px;line-height:17.5px;color:#5b6571;letter-spacing:0.05px;">ISO Numeric</div>
<div class="t" style="left:622.3px;top:307.6px;font-size:17.5px;line-height:17.5px;color:#5b6571;letter-spacing:0.23px;">Code</div>
<div class="t" style="left:757.3px;top:307.6px;font-size:17.5px;line-height:17.5px;color:#5b6571;letter-spacing:0.22px;">Symbol</div>
<div class="t" style="left:892.3px;top:283.6px;font-size:17.5px;line-height:17.5px;color:#5b6571;letter-spacing:-0.28px;">Exchange Rate</div>
<div class="t" style="left:892.3px;top:307.6px;font-size:17.5px;line-height:17.5px;color:#5b6571;letter-spacing:0.07px;">Date</div>
<div class="t" style="right:1087.08px;top:307.6px;font-size:17.5px;line-height:17.5px;color:#5b6571;letter-spacing:-0.28px;">Exchange Rate</div>
<div class="t" style="left:1225.3px;top:283.6px;font-size:17.5px;line-height:17.5px;color:#5b6571;letter-spacing:-0.55px;">EMU</div>
<div class="t" style="left:1225.3px;top:307.6px;font-size:17.5px;line-height:17.5px;color:#5b6571;letter-spacing:0.22px;">Curr<span style="letter-spacing:-1.0px">...</span></div>
<div class="t" style="left:1306.3px;top:283.6px;font-size:17.5px;line-height:17.5px;color:#5b6571;letter-spacing:-0.35px;">Realized Gains</div>
<div class="t" style="left:1306.3px;top:307.6px;font-size:17.5px;line-height:17.5px;color:#5b6571;letter-spacing:-0.6px;">Acc.</div>
<div class="t" style="left:1459.3px;top:283.6px;font-size:17.5px;line-height:17.5px;color:#5b6571;letter-spacing:-0.27px;">Realized</div>
<div class="t" style="left:1459.3px;top:307.6px;font-size:17.5px;line-height:17.5px;color:#5b6571;letter-spacing:-0.33px;">Losses Acc.</div>
<div class="t" style="left:1612.3px;top:283.6px;font-size:17.5px;line-height:17.5px;color:#5b6571;letter-spacing:0.16px;">Unrealized</div>
<div class="t" style="left:1612.3px;top:307.6px;font-size:17.5px;line-height:17.5px;color:#5b6571;letter-spacing:-0.09px;">Gains Acc.</div>
<div class="t" style="left:1765.3px;top:283.6px;font-size:17.5px;line-height:17.5px;color:#5b6571;letter-spacing:0.16px;">Unrealized</div>
<div class="t" style="left:1765.3px;top:307.6px;font-size:17.5px;line-height:17.5px;color:#5b6571;letter-spacing:-0.33px;">Losses Acc.</div>
<div class="t" style="left:1918.3px;top:259.6px;font-size:17.5px;line-height:17.5px;color:#5b6571;letter-spacing:-0.56px;">Conv. LCY</div>
<div class="t" style="left:1918.3px;top:283.6px;font-size:17.5px;line-height:17.5px;color:#5b6571;letter-spacing:0.13px;">Rndg. Debit</div>
<div class="t" style="left:1918.3px;top:307.6px;font-size:17.5px;line-height:17.5px;color:#5b6571;letter-spacing:-0.6px;">Acc.</div>
<div class="t" style="left:2071.3px;top:259.6px;font-size:17.5px;line-height:17.5px;color:#5b6571;letter-spacing:-0.56px;">Conv. LCY</div>
<div class="t" style="left:2071.3px;top:283.6px;font-size:17.5px;line-height:17.5px;color:#5b6571;letter-spacing:0.01px;">Rndg. Credit</div>
<div class="t" style="left:2071.3px;top:307.6px;font-size:17.5px;line-height:17.5px;color:#5b6571;letter-spacing:-0.6px;">Acc.</div>
<div style="position:absolute;left:2231px;top:339px;width:23px;height:957px;background:#fafafa"></div>
<div style="position:absolute;left:82px;top:1273px;width:2172px;height:23px;background:#fafafa"></div>
<div style="position:absolute;left:2236px;top:366px;width:13px;height:133px;border-radius:6.5px;background:#8a8a8a"></div>
<div style="position:absolute;left:109px;top:1278px;width:1166px;height:13px;border-radius:6.5px;background:#8a8a8a"></div>
<svg class="ov" width="2278" height="1310" viewBox="0 0 2278 1310">
<path d="M20.5,42 H43 M31.5,31 L20.5,42 L31.5,53" fill="none" stroke="#1d2b2e" stroke-width="1.45"/>
<path d="M1967,44.5 L1973,51.5 L1988.5,36.5" fill="none" stroke="#4f5866" stroke-width="1.5"/>
<path d="M2112.3,33.6 H2126 V55.5 L2119.1,51.8 L2112.3,55.5 Z" fill="none" stroke="#137e88" stroke-width="1.4"/>
<path d="M2174.7,39.9 H2161.9 V51.7 H2179.4 V44.1 M2176.8,42.7 L2182.8,36.7 M2177.8,36.7 H2183 V41.2" fill="none" stroke="#137e88" stroke-width="1.4"/>
<path d="M2237.6,33.9 L2229.6,41.9 M2229.2,36.4 V42.5 H2235.6 M2215.8,56 L2224,47.8 M2218.4,47.4 H2224.6 V53.6" fill="none" stroke="#137e88" stroke-width="1.4"/>
<g fill="none" stroke="#137e88" stroke-width="1.4" stroke-linejoin="round"><path d="M107.5,107.8 H116.5 Q119,107.8 119.6,111.5 M113.5,107.8 L109.8,121.8 H104.5 Q101.2,121.8 102.2,118 L104.6,110.5 Q105.4,107.8 107.5,107.8"/><path d="M116.5,112 H121.5 Q124.6,112 123.8,115.8 L121.2,124 Q120.4,126.6 118,126.6 H111.5 Q109,126.6 108.4,122.4 M116.5,112 L112.6,126.6"/></g>
<path d="M131.2,115.6 L139.9,123.6 L148.4,115.6" fill="none" stroke="#3b3b3b" stroke-width="1.4"/>
<circle cx="196.8" cy="113" r="7.3" fill="none" stroke="#137e88" stroke-width="1.4"/><path d="M191.4,118.6 L181.4,128.4" stroke="#137e88" stroke-width="1.4"/>
<g fill="none" stroke="#137e88" stroke-width="1.4"><path d="M258,116.6 V109.2 Q258,106.9 255.7,106.9 H240.5 Q238.2,106.9 238.2,109.2 V125 Q238.2,127.3 240.5,127.3 H247.7"/><path d="M250.6,127.3 H255.5 Q257.8,127.3 257.8,125 V119.8 M255.6,122 L257.8,119.6 L260,122 M252.6,125.2 L250.4,127.3 L252.6,129.4"/></g><rect x="240.8" y="109.8" width="3.6" height="3.6" rx="1.2" fill="#137e88"/><rect x="246.4" y="110" width="9" height="3.4" rx="1.2" fill="#137e88"/><rect x="240.8" y="115.9" width="3.8" height="8.4" rx="1.3" fill="#137e88"/>
<path d="M332.2,106.4 V128.4 M321.2,117.4 H343.2" stroke="#137e88" stroke-width="1.4"/>
<g><rect x="426.3" y="108" width="19.6" height="17.8" fill="#137e88"/><rect x="428.2" y="112.6" width="3.6" height="2.6" fill="#fff"/><rect x="433.8" y="112.6" width="4.4" height="2.6" fill="#fff"/><rect x="440.2" y="112.6" width="3.8" height="2.6" fill="#fff"/><rect x="428.2" y="117" width="3.6" height="2.6" fill="#fff"/><rect x="433.8" y="117" width="4.4" height="2.6" fill="#fff"/><rect x="440.2" y="117" width="3.8" height="2.6" fill="#fff"/><rect x="428.2" y="121.4" width="3.6" height="2.8" fill="#fff"/><rect x="433.8" y="121.4" width="4.4" height="2.8" fill="#fff"/><rect x="440.2" y="121.4" width="3.8" height="2.8" fill="#fff"/><path d="M437.5,127.6 L447.2,117.2" stroke="#ebecee" stroke-width="7.5"/><path d="M435.2,128.6 L447.6,115.8" stroke="#137e88" stroke-width="4.2" stroke-linecap="round"/></g>
<g fill="none" stroke="#137e88" stroke-width="1.4"><path d="M562,110.6 H580"/><path d="M567.6,110.6 V108.6 Q567.6,107.4 568.8,107.4 H573.2 Q574.4,107.4 574.4,108.6 V110.6"/><path d="M564.2,110.6 V127 Q564.2,129 566.2,129 H575.6 Q577.6,129 577.6,127 V110.6"/><path d="M567.9,114.4 V124.8 M570.9,114.4 V124.8 M573.9,114.4 V124.8"/></g>
<g transform="translate(681.8,128.3) rotate(-44.2)" fill="none" stroke="#137e88" stroke-width="1.3" stroke-linejoin="round"><path d="M0,0 L6.5,-3 H26.8 A3,3 0 0 1 26.8,3 H6.5 Z M6.5,-3 V3 M23.8,-3 V3"/></g>
<g fill="none" stroke="#137e88" stroke-width="1.4"><path d="M778.6,119 A11.7,11.7 0 0 1 801.4,119"/><circle cx="789.8" cy="118.4" r="3.6"/></g>
<g fill="none" stroke="#137e88" stroke-width="1.4"><path d="M2108,111 V125.2 H2124.4 V121.8"/><path d="M2112,120.2 C2112.8,113.5 2117,110.6 2122.8,110.6 V106.2 L2129.8,113.2 L2122.8,120.2 V115.8 C2118.5,115.8 2114.8,117.2 2112,120.2 Z"/></g>
<path d="M2161.8,107.6 H2184.2 L2175.2,117.8 V126.4 H2170.6 V117.8 Z" fill="none" stroke="#137e88" stroke-width="1.4" stroke-linejoin="miter"/>
<g stroke="#137e88" stroke-width="1.5"><path d="M2216.4,110.8 H2218.9 M2221.4,110.8 H2237.4 M2216.4,115.6 H2218.9 M2221.4,115.6 H2237.4 M2216.4,120.2 H2218.9 M2221.4,120.2 H2237.4 M2216.4,124.9 H2218.9 M2221.4,124.9 H2237.4"/></g>
<circle cx="114.9" cy="178.7" r="10.6" fill="#137e88"/><path d="M109.6,179.6 L113.2,182.8 L120.2,175.2" fill="none" stroke="#fff" stroke-width="2"/>
<g stroke="#137e88" fill="none" stroke-width="1.5"><path d="M339.4,170.6 H346.4 M342.8,167 V174.4 M345.6,167.8 H350.8 M352.4,169.4 H362.8 V174.4 M357.2,172.4 H360.2 M339.4,175 V176 M345.2,175 H348 M352.6,175 H356.6 M339.4,178.2 H347.6 M349.6,178.2 H353.6 M340.4,181.4 H347 M340.2,184.6 H344 M345.8,184.8 H348.4"/></g><path d="M349.6,189.6 L361.4,177.8" stroke="#137e88" stroke-width="4.2" stroke-linecap="round"/><path d="M348.2,190.6 L351,187.8" stroke="#137e88" stroke-width="2"/>
<g stroke="#137e88" fill="none" stroke-width="1.7"><path d="M660.4000000000001,177.4 A10.6,10.6 0 1 1 675.8000000000001,188.2"/><path d="M665.8000000000001,176.6 Q666.2,169.0 671.2,168.0 Q676.0,169.0 676.0,178.6 Q676.0,185.2 671.8000000000001,188.6"/><path d="M671.2,168.0 V173.2 M661.2,173.2 H681.2 M669.0,178.6 H681.8000000000001 M670.6,182.79999999999998 H680.2"/></g><g stroke="#137e88" stroke-width="2.2" stroke-linecap="round"><path d="M661.2,180.5 H667.8000000000001 M662.4000000000001,184.1 H665.2 M662.4000000000001,187.29999999999998 H664.2 M668.6,186.5 H674.6 M669.2,190.0 H673.4000000000001"/></g>
<g stroke="#137e88" fill="none" stroke-width="1.7"><path d="M834.4000000000001,176.8 A10.6,10.6 0 0 1 854.8000000000001,173.6"/><path d="M839.6,176.8 Q840.2,168.8 845.2,167.8 Q849.8000000000001,168.8 850.0,177.8"/><path d="M845.2,167.8 V173.6 M835.2,173.6 H855.0 M842.6,178.4 H849.8000000000001"/></g><g stroke="#137e88" stroke-width="2.2" stroke-linecap="round"><path d="M835.2,180.3 H841.8000000000001 M836.4000000000001,183.9 H839.2 M836.4000000000001,187.1 H838.2 M842.6,186.3 H848.6 M843.2,189.8 H847.4000000000001"/></g><path d="M845.6,188.8 L856.6,178.0" stroke="#fff" stroke-width="7"/><path d="M845.8000000000001,188.6 L856.8000000000001,177.8" stroke="#137e88" stroke-width="4.6" stroke-linecap="round"/><path d="M842.8000000000001,191.0 L845.8000000000001,188.0" stroke="#137e88" stroke-width="2.2"/>
<g stroke="#137e88" fill="none" stroke-width="1.7"><path d="M1107.2,169.1 H1123 Q1124.7,169.1 1124.7,170.8 V187 Q1124.7,188.7 1123,188.7 H1118.8"/><path d="M1116.4,172 H1121.2 V186"/></g><rect x="1119" y="175.8" width="3.2" height="10.2" fill="#137e88"/><path d="M1104.4,178.6 Q1104.8,171.2 1110.8,171 Q1116.4,171.2 1116.8,177.6 L1114.8,183 Q1113,178.6 1111,178.6 Z" fill="#137e88"/><g stroke="#137e88" stroke-width="2.2" stroke-linecap="round"><path d="M1104,180.4 H1110.6 M1105.2,184.0 H1108 M1105.2,187.2 H1107 M1111.4,186.4 H1117.4 M1112,189.9 H1116.2"/></g>
<g fill="none" stroke="#137e88" stroke-width="1.4" stroke-linejoin="miter"><path d="M2224.6,184.8 L2218.4,178.4 L2224.6,177.4 L2229.4,172.4 L2230.3,168.6 L2237.4,175.4 L2233.2,176.4 L2231.2,178.4"/><path d="M2222.6,183.2 L2215.2,190.6"/><circle cx="2232.2" cy="186" r="4.4"/><path d="M2229.2,182.6 L2235.4,189"/></g>
<path d="M91.6,361 H109.4 M102.4,354 L109.4,361 L102.4,368" fill="none" stroke="#323130" stroke-width="1.4"/>
<circle cx="276.5" cy="352.7" r="1.6" fill="#222"/><circle cx="276.5" cy="361.7" r="1.6" fill="#222"/><circle cx="276.5" cy="370.7" r="1.6" fill="#222"/>
<path d="M178.6,321.6 V308.6 M174.8,312.4 L178.6,308.4 L182.4,312.4" fill="none" stroke="#5b6571" stroke-width="1.5"/>
<rect x="1293.5" y="252" width="934.2" height="1026.2" fill="none" stroke="#b44c52" stroke-width="1.25"/>
<path d="M2242.5,345.6 L2249.6,355.6 H2235.4 Z" fill="#8a8a8a" stroke="#8a8a8a" stroke-width="1.2" stroke-linejoin="round"/>
<path d="M2235.6,1255 H2249.6 L2242.6,1264.4 Z" fill="#8a8a8a" stroke="#8a8a8a" stroke-width="1.2" stroke-linejoin="round"/>
<path d="M98.4,1278.6 V1291.6 L88.6,1285.1 Z" fill="#8a8a8a" stroke="#8a8a8a" stroke-width="1.2" stroke-linejoin="round"/>
<path d="M2237.4,1278.4 V1291.4 L2247.6,1284.9 Z" fill="#8a8a8a" stroke="#8a8a8a" stroke-width="1.2" stroke-linejoin="round"/>
</svg>
</body></html>
